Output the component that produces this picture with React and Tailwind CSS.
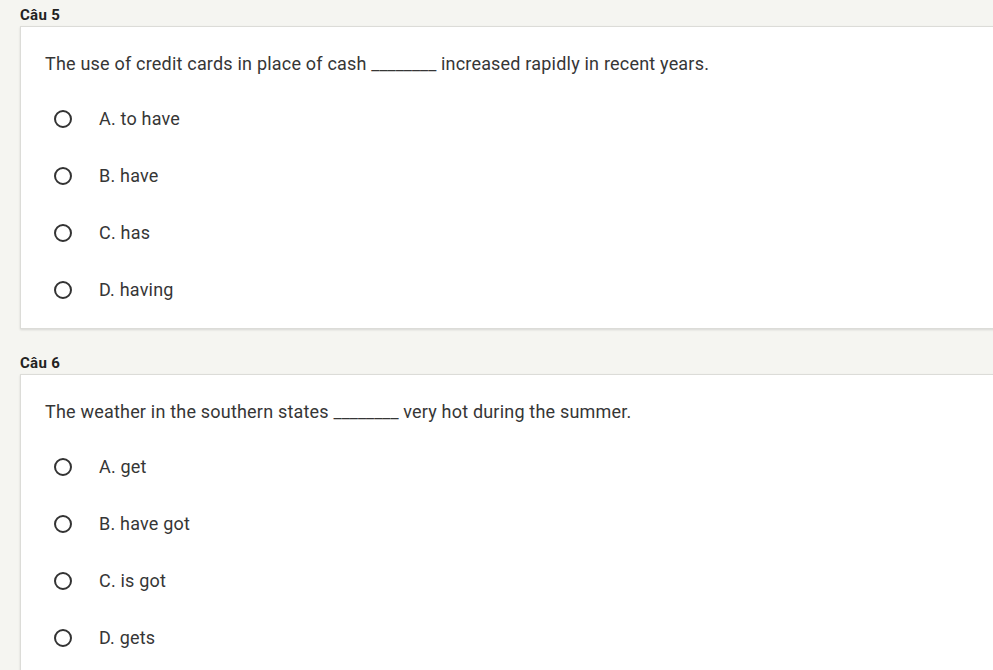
export default function App() {
  const questions = [
    {
      label: "Câu 5",
      pre: "The use of credit cards in place of cash ",
      post: " increased rapidly in recent years.",
      opts: ["A. to have", "B. have", "C. has", "D. having"],
    },
    {
      label: "Câu 6",
      pre: "The weather in the southern states ",
      post: " very hot during the summer.",
      opts: ["A. get", "B. have got", "C. is got", "D. gets"],
    },
  ];
  return (
    <div
      className="min-h-[670px] w-[993px] overflow-hidden bg-[#f5f5f1] pl-[20px] pt-[5px]"
      style={{ fontFamily: "Roboto, 'Liberation Sans', sans-serif" }}
    >
      {questions.map((q, i) => (
        <div key={i} className={i > 0 ? "mt-[24px]" : ""}>
          <div className="h-[20px] text-[15px] leading-[20px] font-bold tracking-[0.3px] text-[#222]">
            {q.label}
          </div>
          <div className="mt-[1px] w-[1000px] border border-[#dcdcd8] bg-white pl-[24px] pt-[25px] pb-[10px] shadow-[0_1px_2px_rgba(0,0,0,0.12)]">
            <div className="h-[24px] text-[18px] leading-[24px] tracking-[0.2px] text-[#363636] whitespace-pre">
              {q.pre}
              <span className="tracking-[0px]">________</span>
              {q.post}
            </div>
            <div className="mt-[14px]">
              {q.opts.map((o, j) => (
                <div key={j} className="flex h-[57px] items-center">
                  <div className="ml-[9px] h-[18px] w-[18px] rounded-full border-2 border-[#333]" />
                  <div className="ml-[27px] text-[18px] leading-[24px] tracking-[0.2px] text-[#363636]">{o}</div>
                </div>
              ))}
            </div>
          </div>
        </div>
      ))}
    </div>
  );
}
